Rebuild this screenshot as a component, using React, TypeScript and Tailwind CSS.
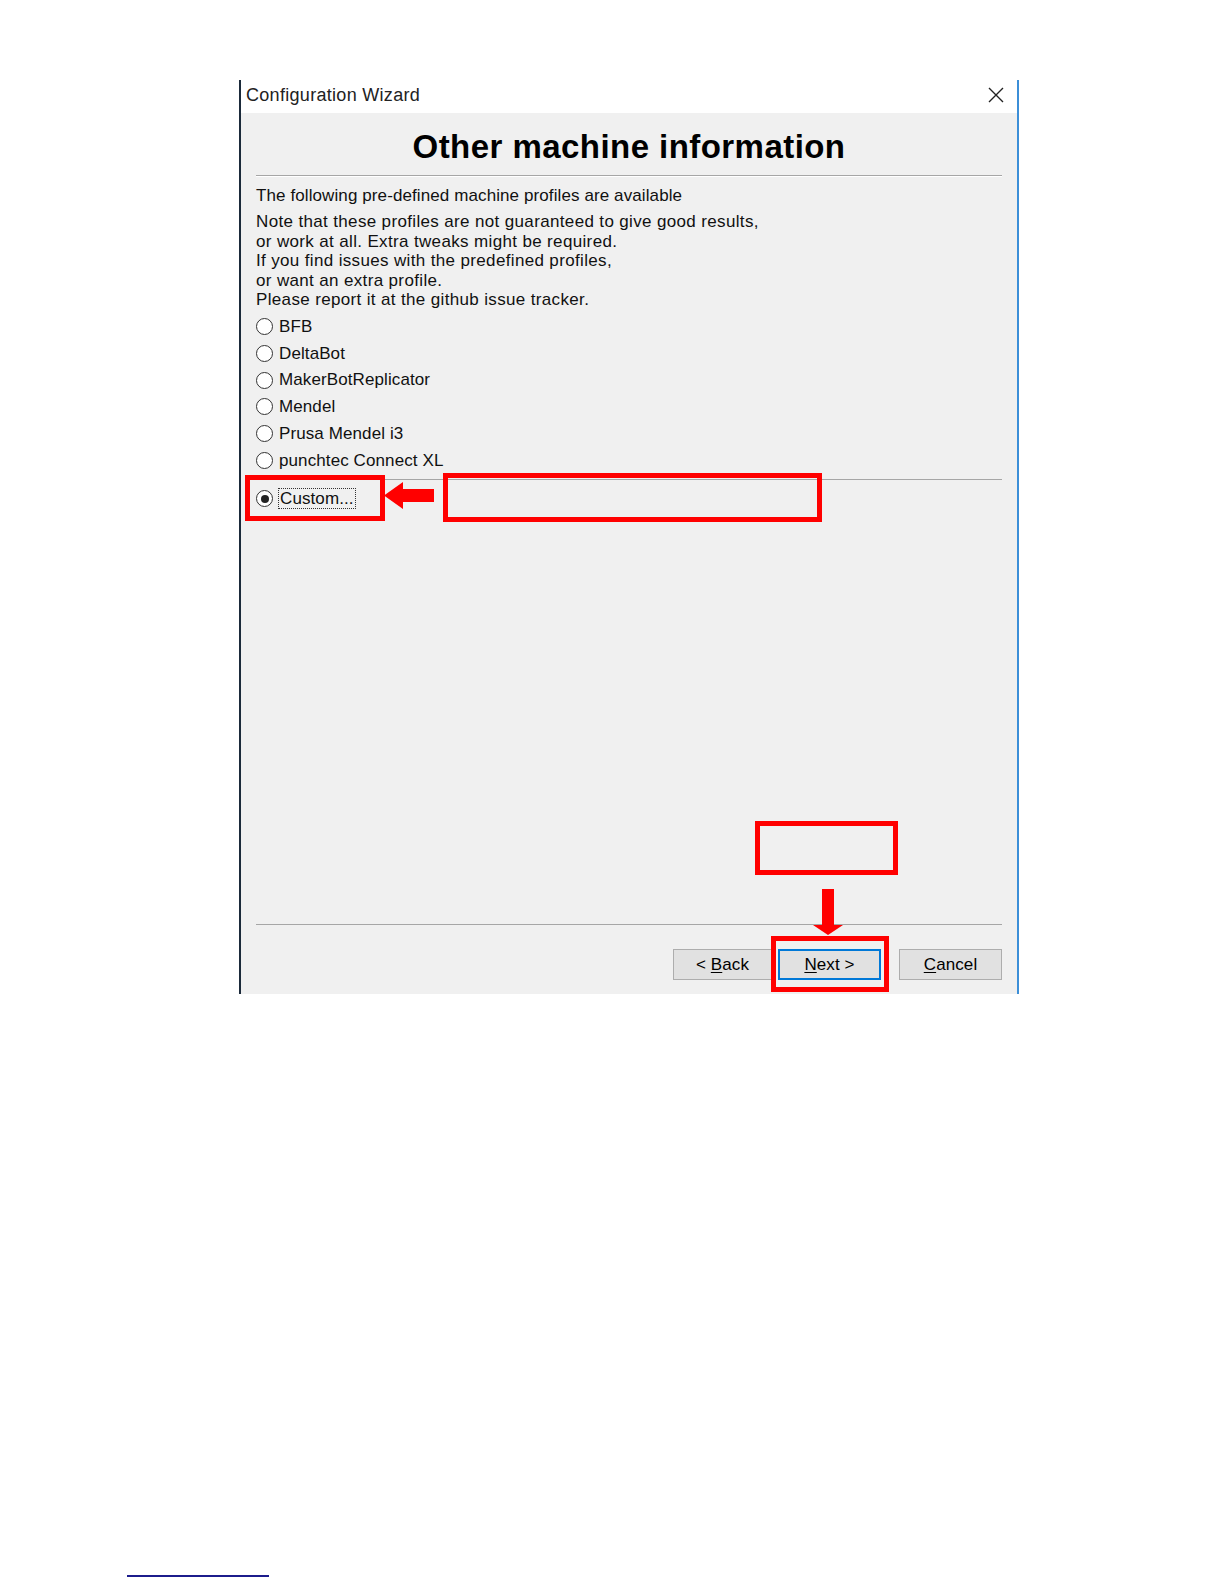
import React from "react";

const body = { fontFamily: '"Liberation Sans", Arial, sans-serif' };

const profiles = [
  "BFB",
  "DeltaBot",
  "MakerBotReplicator",
  "Mendel",
  "Prusa Mendel i3",
  "punchtec Connect XL",
];

function Radio({ checked }: { checked?: boolean }) {
  return (
    <span className="flex h-[17px] w-[17px] shrink-0 items-center justify-center rounded-full border-[1.5px] border-[#333333] bg-white">
      {checked && <span className="h-[8px] w-[8px] rounded-full bg-[#222222]" />}
    </span>
  );
}

function WinButton({
  label,
  mnemonic,
  before = "",
  after = "",
  width,
  primary,
}: {
  label: string;
  mnemonic: string;
  before?: string;
  after?: string;
  width: string;
  primary?: boolean;
}) {
  return (
    <button
      type="button"
      className={`flex h-[31px] items-center justify-center whitespace-pre bg-[#e1e1e1] text-[17px] tracking-[0.1px] text-black ${width} ${
        primary ? "border-2 border-[#0078d7]" : "border border-[#adadad]"
      }`}
      style={body}
    >
      {before}
      <span className="underline underline-offset-2">{mnemonic}</span>
      {label}
      {after}
    </button>
  );
}

export default function App() {
  return (
    <div className="relative min-h-[1584px] w-[1224px] bg-white pt-[80px]">
      {/* dialog window */}
      <div className="ml-[239px] flex h-[914px] w-[780px] flex-col border-l-2 border-r-2 border-l-[#1b2a3a] border-r-[#3c8fd8]">
        <div className="flex h-[33px] items-center justify-between bg-white pb-[3px] pl-[5px] pr-[13px]">
          <span className="text-[18px] tracking-[0.3px] text-[#222222]" style={body}>
            Configuration Wizard
          </span>
          <svg width="16" height="16" viewBox="0 0 16 16">
            <path d="M1 1 L15 15 M15 1 L1 15" stroke="#222" strokeWidth="1.4" />
          </svg>
        </div>

        <div
          className="flex flex-1 flex-col bg-[#f0f0f0] px-[15px] text-[17px] tracking-[0.1px] text-[#111111]"
          style={body}
        >
          <h1 className="mt-[14px] text-center text-[33px] font-bold leading-[40px] tracking-[0.45px] text-black">
            Other machine information
          </h1>
          <div className="mt-[8px] border-t border-b border-t-[#a6a6a6] border-b-white" />

          <p className="mt-[9px] leading-[20px]">The following pre-defined machine profiles are available</p>
          <p className="mt-[6px] leading-[19.5px] tracking-[0.35px]">
            Note that these profiles are not guaranteed to give good results,
            <br />
            or work at all. Extra tweaks might be required.
            <br />
            If you find issues with the predefined profiles,
            <br />
            or want an extra profile.
            <br />
            Please report it at the github issue tracker.
          </p>

          <div className="mt-[4px] flex flex-col">
            {profiles.map((p) => (
              <label key={p} className="flex h-[26.7px] items-center gap-[6px]">
                <Radio />
                <span>{p}</span>
              </label>
            ))}
          </div>

          <div className="mt-[5px] border-t border-[#a6a6a6]" />

          <label className="mt-[6px] flex h-[26.7px] items-center gap-[5px]">
            <Radio checked />
            <span className="border border-dotted border-[#333333] px-[1px] leading-[19px]">Custom...</span>
          </label>

          <div className="mt-auto border-t border-[#a6a6a6]" />
          <div className="mb-[14px] mt-[24px] flex justify-end">
            <WinButton before="< " mnemonic="B" label="ack" width="w-[99px]" />
            <div className="w-[6px]" />
            <WinButton mnemonic="N" label="ext" after=" >" width="w-[103px]" primary />
            <div className="w-[18px]" />
            <WinButton mnemonic="C" label="ancel" width="w-[103px]" />
          </div>
        </div>
      </div>

      {/* footnote rule */}
      <div className="ml-[127px] mt-[581px] h-[1.5px] w-[142px] bg-[#1c1c8c]" />

      {/* annotations */}
      <div className="absolute left-[245px] top-[475px] h-[46px] w-[140px] border-[5px] border-[#ff0000]" />
      <svg className="absolute left-[384px] top-[482px]" width="51" height="27" viewBox="0 0 51 27">
        <polygon points="0,13.5 19,0 19,7 50,7 50,20 19,20 19,27" fill="#ff0000" />
      </svg>
      <div className="absolute left-[443px] top-[473px] h-[49px] w-[379px] border-[5px] border-[#ff0000]" />
      <div className="absolute left-[755px] top-[821px] h-[54px] w-[143px] border-[5px] border-[#ff0000]" />
      <svg className="absolute left-[813px] top-[889px]" width="30" height="47" viewBox="0 0 30 47">
        <polygon points="9,0 21,0 21,36 30,36 15,46 0,36 9,36" fill="#ff0000" />
      </svg>
      <div className="absolute left-[771px] top-[936px] h-[56px] w-[118px] border-[5px] border-[#ff0000]" />
    </div>
  );
}
